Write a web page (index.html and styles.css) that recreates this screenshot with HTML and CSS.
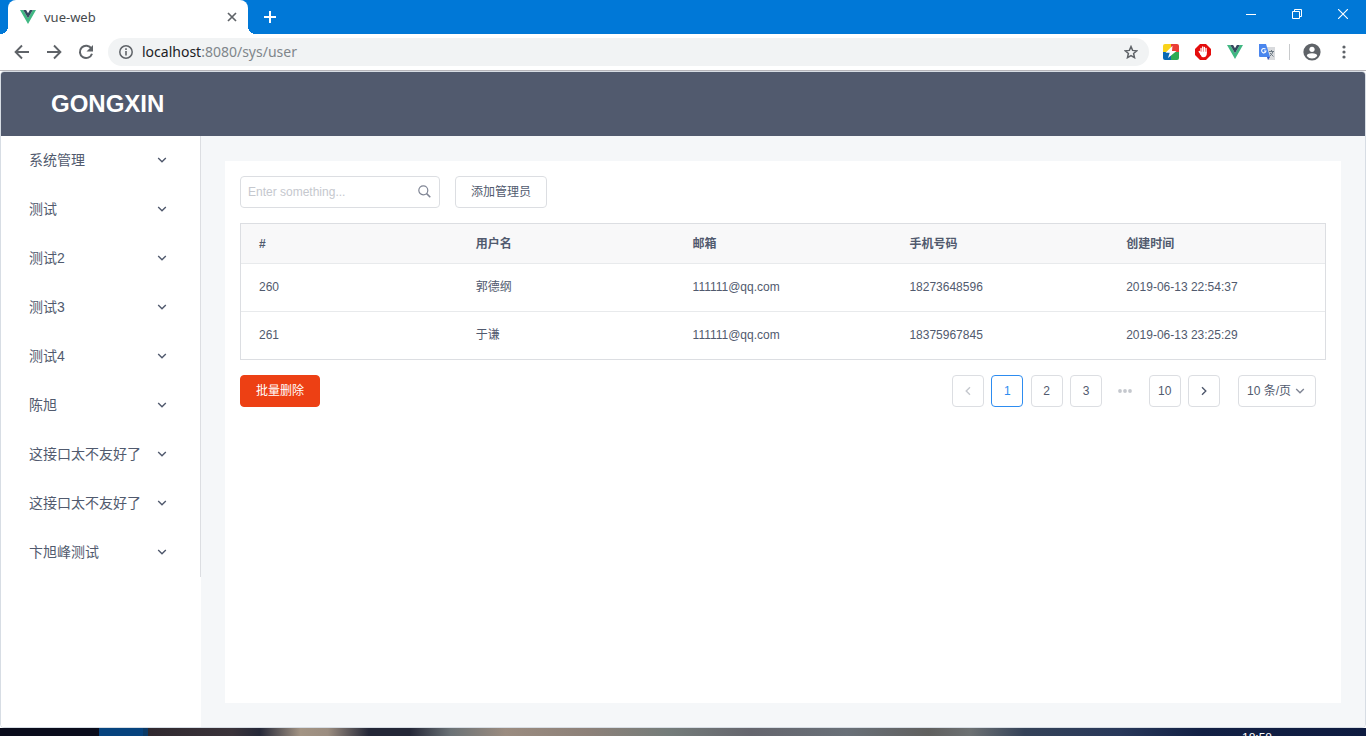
FILE: index.html
```html
<!DOCTYPE html>
<html lang="zh-CN">
<head>
<meta charset="utf-8">
<title>vue-web</title>
<link rel="stylesheet" href="styles.css">
</head>
<body>
<svg class="defs" aria-hidden="true">
  <symbol id="vue" viewBox="0 0 16 14"><path fill="#41b883" d="M0 0h3.200L8 8.300 12.800 0H16L8 14z"/><path fill="#34495e" d="M3.200 0h2.900L8 3.300 9.900 0h2.900L8 8.300z"/></symbol>
  <symbol id="chev" viewBox="0 0 10 10"><path d="M1.2 3l3.8 3.8L8.800 3" fill="none" stroke="currentColor" stroke-width="1.4"/></symbol>
</svg>
<header class="tabstrip">
  <div class="tab">
    <svg class="vue-icon" viewBox="0 0 16 14"><use href="#vue"/></svg>
    <span class="tab-title">vue-web</span>
    <button class="icon-btn" aria-label="Close tab"><svg width="10" height="10" viewBox="0 0 10 10"><path d="M1 1l8 8M9 1l-8 8" stroke="#5f6368" stroke-width="1.7"/></svg></button>
  </div>
  <button class="icon-btn new-tab" aria-label="New tab"><svg width="12" height="12" viewBox="0 0 12 12"><path d="M6 0v12M0 6h12" stroke="#fff" stroke-width="2"/></svg></button>
  <div class="window-controls">
    <button class="icon-btn" aria-label="Minimize"><svg width="10" height="10" viewBox="0 0 10 10"><path d="M0 5.500h10" stroke="#fff"/></svg></button>
    <button class="icon-btn" aria-label="Restore"><svg width="10" height="10" viewBox="0 0 10 10"><path d="M.5 2.500h7v7h-7zM2.500 2.500v-2h7v7h-2" fill="none" stroke="#fff"/></svg></button>
    <button class="icon-btn" aria-label="Close"><svg width="10" height="10" viewBox="0 0 10 10"><path d="M0 0l10 10M10 0L0 10" stroke="#fff" stroke-width="1.1"/></svg></button>
  </div>
</header>
<nav class="toolbar">
  <div class="nav-buttons">
    <button class="icon-btn" aria-label="Back"><svg width="16" height="16" viewBox="0 0 16 16"><path d="M15 8H2M8 1.500L1.600 8 8 14.500" fill="none" stroke="#5f6368" stroke-width="1.900"/></svg></button>
    <button class="icon-btn" aria-label="Forward"><svg width="16" height="16" viewBox="0 0 16 16"><path d="M1 8h13M8 1.500L14.400 8 8 14.500" fill="none" stroke="#5f6368" stroke-width="1.900"/></svg></button>
    <button class="icon-btn" aria-label="Reload"><svg width="16" height="16" viewBox="0 0 16 16"><path d="M13.400 4.600A6.200 6.200 0 1 0 14 9.800" fill="none" stroke="#5f6368" stroke-width="2"/><path d="M15 1v6.500H8.500z" fill="#5f6368"/></svg></button>
  </div>
  <div class="address">
    <svg width="14" height="14" viewBox="0 0 14 14"><circle cx="7" cy="7" r="6.200" fill="none" stroke="#5f6368" stroke-width="1.500"/><path d="M7 6v4.500M7 3.300v1.600" stroke="#5f6368" stroke-width="1.600"/></svg>
    <span class="url">localhost<span class="url-path">:8080/sys/user</span></span>
    <button class="icon-btn" aria-label="Bookmark"><svg width="14" height="14" viewBox="0 0 14 14"><path d="M7 1.600l1.600 3.800 4.100.400-3.100 2.700.900 4.100L7 10.500l-3.500 2.100.900-4.100-3.100-2.700 4.100-.400z" fill="none" stroke="#5f6368" stroke-width="1.500"/></svg></button>
  </div>
  <div class="extensions">
    <svg width="16" height="16" viewBox="0 0 16 16"><clipPath id="rc"><rect width="16" height="16" rx="2"/></clipPath><g clip-path="url(#rc)"><path fill="#f9d31b" d="M0 0h8v8H0z"/><path fill="#ea3e36" d="M8 0h8v8H8z"/><path fill="#0a69b3" d="M0 8h8v8H0z"/><path fill="#2eaa52" d="M8 8h8v8H8z"/></g><path fill="#fff" d="M9.500 1.800L2.500 8.800h4.200L5 14l8.500-7H9z"/></svg>
    <svg width="16" height="16" viewBox="0 0 16 16"><path fill="#e40d0d" d="M5 0h6l5 5v6l-5 5H5l-5-5V5z"/><path d="M6 9V4.500M7.700 8V3M9.400 8V3.300M11.100 9V4.500M6 10L4.200 7.500" stroke="#fff" stroke-width="1.300" stroke-linecap="round"/><path fill="#fff" d="M5.300 7.800h6.400v2.500q-.3 3-3.200 3-2.300 0-3.200-3z"/></svg>
    <svg class="vue-icon" viewBox="0 0 16 14"><use href="#vue"/></svg>
    <svg width="16" height="16" viewBox="0 0 16 16"><path fill="#d8dadd" d="M6 3h10v13H9z"/><path fill="#4a86ee" d="M0 0h7l4 13H1q-1 0-1-1z"/><path fill="#3553be" d="M8 13h3l-2 3z"/><path d="M6.500 5.200A2.200 2.200 0 1 0 7 7H5" fill="none" stroke="#fff" stroke-width="1.100"/><path d="M10 7.500h5M12.500 6v1.500M14 7.500q-1 3-3 4.500M11 9l3.500 3.500" stroke="#6d7b85" fill="none"/></svg>
    <span class="divider"></span>
    <svg width="18" height="18" viewBox="0 0 18 18"><circle cx="9" cy="9" r="8.600" fill="#5f6368"/><circle cx="9" cy="6.300" r="2.600" fill="#fff"/><path fill="#fff" d="M3.800 13q0-2.700 5.200-2.700t5.200 2.700q-2 2.600-5.200 2.600T3.800 13z"/></svg>
    <button class="icon-btn menu-btn" aria-label="Menu"><svg width="4" height="14" viewBox="0 0 4 14"><g fill="#5f6368"><circle cx="2" cy="2" r="1.600"/><circle cx="2" cy="7" r="1.600"/><circle cx="2" cy="12" r="1.600"/></g></svg></button>
  </div>
</nav>
<div class="layout">
  <header class="brand-bar"><h1 class="brand">GONGXIN</h1></header>
  <div class="body">
    <aside class="sider">
      <ul class="menu">
        <li><button class="menu-item">系统管理<svg class="chev"><use href="#chev"/></svg></button></li>
        <li><button class="menu-item">测试<svg class="chev"><use href="#chev"/></svg></button></li>
        <li><button class="menu-item">测试2<svg class="chev"><use href="#chev"/></svg></button></li>
        <li><button class="menu-item">测试3<svg class="chev"><use href="#chev"/></svg></button></li>
        <li><button class="menu-item">测试4<svg class="chev"><use href="#chev"/></svg></button></li>
        <li><button class="menu-item">陈旭<svg class="chev"><use href="#chev"/></svg></button></li>
        <li><button class="menu-item">这接口太不友好了<svg class="chev"><use href="#chev"/></svg></button></li>
        <li><button class="menu-item">这接口太不友好了<svg class="chev"><use href="#chev"/></svg></button></li>
        <li><button class="menu-item">卞旭峰测试<svg class="chev"><use href="#chev"/></svg></button></li>
      </ul>
    </aside>
    <main class="content">
      <section class="card">
        <div class="actions">
          <div class="search">
            <input type="text" aria-label="Search" placeholder="Enter something...">
            <svg width="13" height="13" viewBox="0 0 13 13"><circle cx="5.300" cy="5.300" r="4.500" fill="none" stroke="#808695" stroke-width="1.200"/><path d="M8.600 8.600l3.700 3.700" stroke="#808695" stroke-width="1.500"/></svg>
          </div>
          <button class="btn">添加管理员</button>
        </div>
        <table class="table">
          <thead><tr><th>#</th><th>用户名</th><th>邮箱</th><th>手机号码</th><th>创建时间</th></tr></thead>
          <tbody>
            <tr><td>260</td><td>郭德纲</td><td>111111@qq.com</td><td>18273648596</td><td>2019-06-13 22:54:37</td></tr>
            <tr><td>261</td><td>于谦</td><td>111111@qq.com</td><td>18375967845</td><td>2019-06-13 23:25:29</td></tr>
          </tbody>
        </table>
        <div class="footer">
          <button class="btn btn-danger">批量删除</button>
          <div class="pagination">
            <div class="pages">
              <button class="page" disabled aria-label="Previous"><svg class="chev prev"><use href="#chev"/></svg></button>
              <button class="page active">1</button>
              <button class="page">2</button>
              <button class="page">3</button>
              <span class="dots"><svg width="14" height="4" viewBox="0 0 14 4"><g fill="#c5c8ce"><circle cx="2" cy="2" r="1.900"/><circle cx="7" cy="2" r="1.900"/><circle cx="12" cy="2" r="1.900"/></g></svg></span>
              <button class="page">10</button>
              <button class="page" aria-label="Next"><svg class="chev next"><use href="#chev"/></svg></button>
            </div>
            <div class="size">
              <select aria-label="Page size"><option>10 条/页</option></select>
              <svg class="chev"><use href="#chev"/></svg>
            </div>
          </div>
        </div>
      </section>
    </main>
  </div>
</div>
<footer class="taskbar"><span class="task"></span><span class="clock">18:58</span></footer>
</body>
</html>
```
FILE: styles.css
```css
* { box-sizing: border-box; }
body {
  margin: 0;
  height: 100vh;
  display: flex;
  flex-direction: column;
  overflow: hidden;
  font: 12px/18px "Liberation Sans", "Noto Sans CJK SC", sans-serif;
  color: #515a6e;
  background: #fff;
}
button, input, select { font: inherit; color: inherit; margin: 0; }
svg { display: block; flex: none; }
.defs { position: absolute; width: 0; height: 0; }
.icon-btn { border: 0; padding: 0; background: none; display: flex; }
.vue-icon { width: 16px; height: 14px; }

.tabstrip {
  flex: none;
  height: 34px;
  display: flex;
  align-items: stretch;
  padding-left: 8px;
  background: #0078d7;
}
.tab {
  position: relative;
  width: 240px;
  display: flex;
  align-items: center;
  gap: 8px;
  padding: 0 11px 0 12px;
  background: #fff;
  border-radius: 8px 8px 0 0;
}
.tab::before, .tab::after {
  content: "";
  position: absolute;
  bottom: 0;
  width: 8px;
  height: 8px;
}
.tab::before { right: 100%; background: radial-gradient(circle at 0 0, transparent 8px, #fff 8px); }
.tab::after { left: 100%; background: radial-gradient(circle at 100% 0, transparent 8px, #fff 8px); }
.tab-title { flex: 1; font: 13px/18px "Noto Sans", sans-serif; color: #45494d; }
.new-tab { align-self: center; margin-left: 16px; }
.window-controls { margin-left: auto; display: flex; gap: 36px; padding: 9px 18px 0 0; }

.toolbar {
  flex: none;
  height: 37px;
  display: flex;
  align-items: center;
  padding: 0 20px 0 14px;
  border-bottom: 1px solid #b5b4b9;
}
.nav-buttons { display: flex; gap: 16px; }
.address {
  flex: 1;
  height: 28px;
  display: flex;
  align-items: center;
  gap: 9px;
  margin: 0 14px;
  padding: 0 11px;
  border-radius: 14px;
  background: #f1f3f4;
}
.url { flex: 1; font: 14px/20px "Noto Sans", sans-serif; color: #202124; }
.url-path { color: #80868b; }
.extensions { display: flex; align-items: center; gap: 16px; }
.divider { width: 1px; height: 16px; margin: 0 -3px 0 -2px; background: #c8cacc; }
.menu-btn { margin-left: 5px; }

.layout {
  flex: 1;
  min-height: 0;
  display: flex;
  flex-direction: column;
  border: 1px solid #d7dde4;
  border-radius: 4px;
  overflow: hidden;
}
.brand-bar { flex: none; height: 64px; padding: 0 50px; background: #515a6e; }
.brand { margin: 0; font-size: 24px; line-height: 64px; color: #fff; }
.body { flex: 1; display: flex; min-height: 0; background: #f5f7f9; }
.sider { flex: none; width: 200px; background: #fff; }
.menu { list-style: none; margin: 0; padding: 0; border-right: 1px solid #dcdee2; }
.menu-item {
  width: 100%;
  height: 49px;
  display: flex;
  align-items: center;
  justify-content: space-between;
  padding: 0 33px 1px 28px;
  border: 0;
  background: none;
  font-size: 14px;
  white-space: nowrap;
}
.chev { width: 10px; height: 10px; }
.content { flex: 1; display: flex; padding: 25px 24px 24px; }
.card { flex: 1; min-width: 0; padding: 15px; background: #fff; }
.actions { display: flex; gap: 15px; }
.search { position: relative; width: 200px; }
.search input {
  width: 100%;
  height: 32px;
  padding: 0 32px 0 7px;
  border: 1px solid #dcdee2;
  border-radius: 4px;
  background: #fff;
}
.search input::placeholder { color: #c5c8ce; }
.search svg { position: absolute; right: 9px; top: 9px; }
.btn {
  height: 32px;
  padding: 0 15px;
  border: 1px solid #dcdee2;
  border-radius: 4px;
  background: #fff;
}
.btn-danger { color: #fff; background: #ed4014; border-color: #ed4014; }

.table {
  width: 100%;
  margin: 15px 0;
  table-layout: fixed;
  border: 1px solid #dcdee2;
  border-spacing: 0;
}
.table th, .table td { padding: 0 18px; text-align: left; border-bottom: 1px solid #e8eaec; }
.table th { height: 40px; background: #f8f8f9; }
.table td { height: 48px; padding-bottom: 1px; }
.table tbody tr:last-child td { height: 47px; border-bottom: 0; }

.footer { display: flex; justify-content: space-between; }
.pagination { display: flex; gap: 18px; padding-right: 10px; }
.pages { width: 268px; display: flex; justify-content: space-between; }
.page, .dots {
  width: 32px;
  height: 32px;
  display: flex;
  align-items: center;
  justify-content: center;
  padding: 0;
}
.page { border: 1px solid #dcdee2; border-radius: 4px; background: #fff; }
.page.active { color: #2d8cf0; border-color: #2d8cf0; }
.page:disabled { color: #c5c8ce; }
.prev { transform: rotate(90deg); }
.next { transform: rotate(-90deg); }
.size { position: relative; }
.size select {
  width: 78px;
  height: 32px;
  padding: 0 8px;
  appearance: none;
  border: 1px solid #dcdee2;
  border-radius: 4px;
  background: #fff;
}
.size .chev { position: absolute; right: 11px; top: 11px; color: #808695; }

.taskbar {
  flex: none;
  height: 8px;
  display: flex;
  overflow: hidden;
  background: linear-gradient(90deg, #0a0c1c 0, #0a0c1c 7%, #30292f 11%, #3a333a 17%, #252838 19%, #a39484 22%, #9b8d80 24%, #242737 27%, #242737 30%, #6b7276 33%, #9b8c80 37%, #8d8179 43%, #747c7a 49%, #65666e 55%, #697078 62%, #60605f 68%, #6d7173 71%, #344258 75%, #28385a 82%, #122044 88%, #0e1b40 100%);
}
.task { width: 49px; margin-left: 99px; background: #06437e; border-right: 5px solid #0b3a66; }
.clock { margin: 2px 94px 0 auto; line-height: 16px; color: #fff; }
```
